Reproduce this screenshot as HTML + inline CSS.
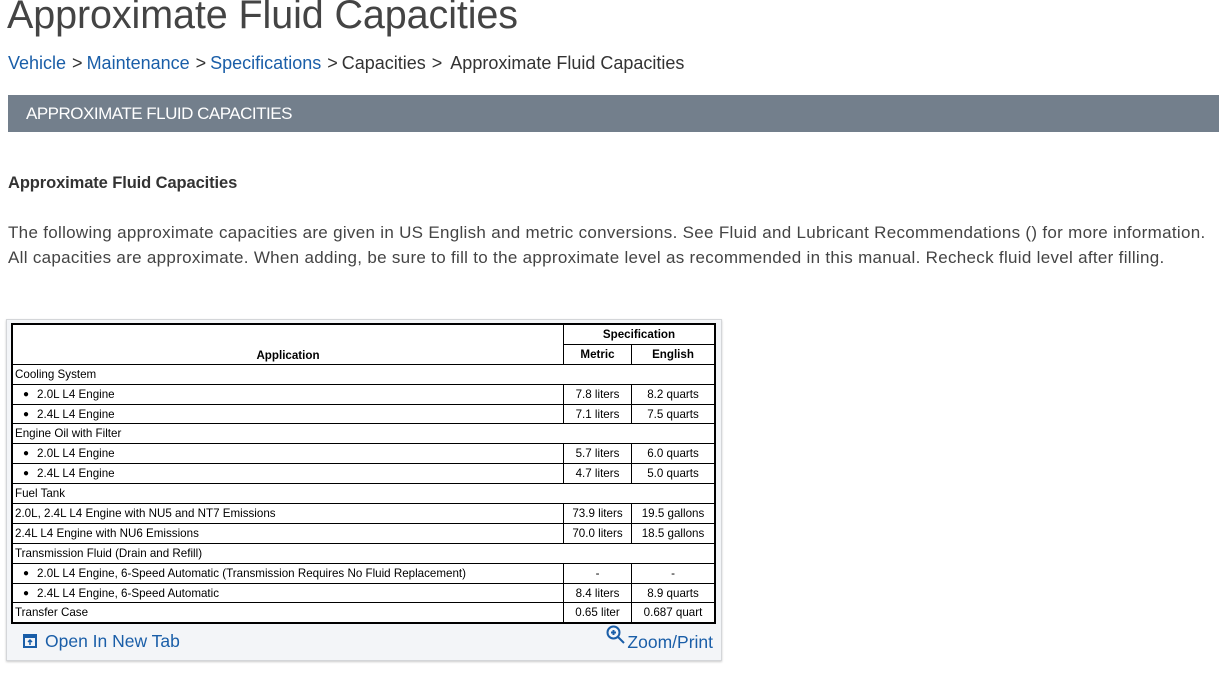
<!DOCTYPE html>
<html><head><meta charset="utf-8"><style>
body{margin:0;width:1219px;height:684px;background:#fff;font-family:"Liberation Sans",sans-serif;color:#333;position:relative;overflow:hidden}
.t{position:absolute;left:7px;top:-7px;font-size:39.5px;font-weight:300;color:#444;letter-spacing:-0.1px}
.bc{position:absolute;left:8px;top:53px;font-size:18px;color:#333;white-space:nowrap}
.bc a{color:#1a5ea8;text-decoration:none}
.bc .s{display:inline-block;margin:0 4px 0 6px;color:#333}
.ban{position:absolute;left:8px;top:95px;width:1211px;height:37px;background:#737f8c;color:#fff;font-size:17px;line-height:37px;text-indent:18px;letter-spacing:-0.5px}
.h{position:absolute;left:8px;top:174px;font-size:16.5px;font-weight:bold;color:#333;letter-spacing:-0.1px}
.p{position:absolute;left:8px;top:220px;font-size:17px;line-height:25px;color:#444;white-space:nowrap;letter-spacing:0.3px}
.box{position:absolute;left:6px;top:319px;width:714px;height:340px;border:1px solid #d4d6d9;background:#f3f5f8;box-shadow:0 1px 2px #ccc}
table{position:absolute;left:4px;top:3px;width:705px;border-collapse:collapse;background:#fff;font-size:11.6px;color:#000;border:2px solid #000}
td{border:1px solid #000;height:18.9px;padding:0 0 0 2px;white-space:nowrap}
td.c{text-align:center;padding:0}
.b{padding-left:10px}
.b:before{content:"●";font-size:10px;margin-right:8px;position:relative;top:-1px}
th{font-weight:bold;border:1px solid #000;height:18.9px;padding:0}
.ft{position:absolute;top:311px;font-size:17.5px;color:#1a5ea8}
</style></head><body>
<div class="t">Approximate Fluid Capacities</div>
<div class="bc"><a>Vehicle</a><span class="s">&gt;</span><a>Maintenance</a><span class="s">&gt;</span><a>Specifications</a><span class="s">&gt;</span>Capacities<span class="s">&gt;</span> Approximate Fluid Capacities</div>
<div class="ban">APPROXIMATE FLUID CAPACITIES</div>
<div class="h">Approximate Fluid Capacities</div>
<div class="p">The following approximate capacities are given in US English and metric conversions. See Fluid and Lubricant Recommendations () for more information.<br>All capacities are approximate. When adding, be sure to fill to the approximate level as recommended in this manual. Recheck fluid level after filling.</div>
<div class="box">
<table>
<tr><th rowspan="2" style="vertical-align:bottom;padding-bottom:2px">Application</th><th colspan="2">Specification</th></tr>
<tr><th style="width:67px">Metric</th><th style="width:82px">English</th></tr>
<tr><td colspan="3">Cooling System</td></tr>
<tr><td class="b">2.0L L4 Engine</td><td class="c">7.8 liters</td><td class="c">8.2 quarts</td></tr>
<tr><td class="b">2.4L L4 Engine</td><td class="c">7.1 liters</td><td class="c">7.5 quarts</td></tr>
<tr><td colspan="3">Engine Oil with Filter</td></tr>
<tr><td class="b">2.0L L4 Engine</td><td class="c">5.7 liters</td><td class="c">6.0 quarts</td></tr>
<tr><td class="b">2.4L L4 Engine</td><td class="c">4.7 liters</td><td class="c">5.0 quarts</td></tr>
<tr><td colspan="3">Fuel Tank</td></tr>
<tr><td>2.0L, 2.4L L4 Engine with NU5 and NT7 Emissions</td><td class="c">73.9 liters</td><td class="c">19.5 gallons</td></tr>
<tr><td>2.4L L4 Engine with NU6 Emissions</td><td class="c">70.0 liters</td><td class="c">18.5 gallons</td></tr>
<tr><td colspan="3">Transmission Fluid (Drain and Refill)</td></tr>
<tr><td class="b">2.0L L4 Engine, 6-Speed Automatic (Transmission Requires No Fluid Replacement)</td><td class="c">-</td><td class="c">-</td></tr>
<tr><td class="b">2.4L L4 Engine, 6-Speed Automatic</td><td class="c">8.4 liters</td><td class="c">8.9 quarts</td></tr>
<tr><td>Transfer Case</td><td class="c">0.65 liter</td><td class="c">0.687 quart</td></tr>
</table>
<div class="ft" style="left:16px"><svg width="14" height="14" viewBox="0 0 14 14" style="vertical-align:-1px;margin-right:8px"><rect x="1" y="1" width="12" height="12" fill="none" stroke="#1a5ea8" stroke-width="2"/><rect x="1" y="1" width="12" height="3" fill="#1a5ea8"/><path d="M7 11V6M5 8l2-2 2 2" stroke="#1a5ea8" stroke-width="1.5" fill="none"/></svg>Open In New Tab</div>
<div class="ft" style="right:8px;top:311px;height:22px;line-height:22px"><svg width="20" height="20" viewBox="0 0 20 20" style="position:absolute;left:-21px;top:-6px"><circle cx="7.5" cy="7.5" r="6" fill="none" stroke="#1a5ea8" stroke-width="2"/><path d="M12 12l6 6M7.5 5v5M5 7.5h5" stroke="#1a5ea8" stroke-width="2"/></svg>Zoom/Print</div>
</div>
</body></html>
